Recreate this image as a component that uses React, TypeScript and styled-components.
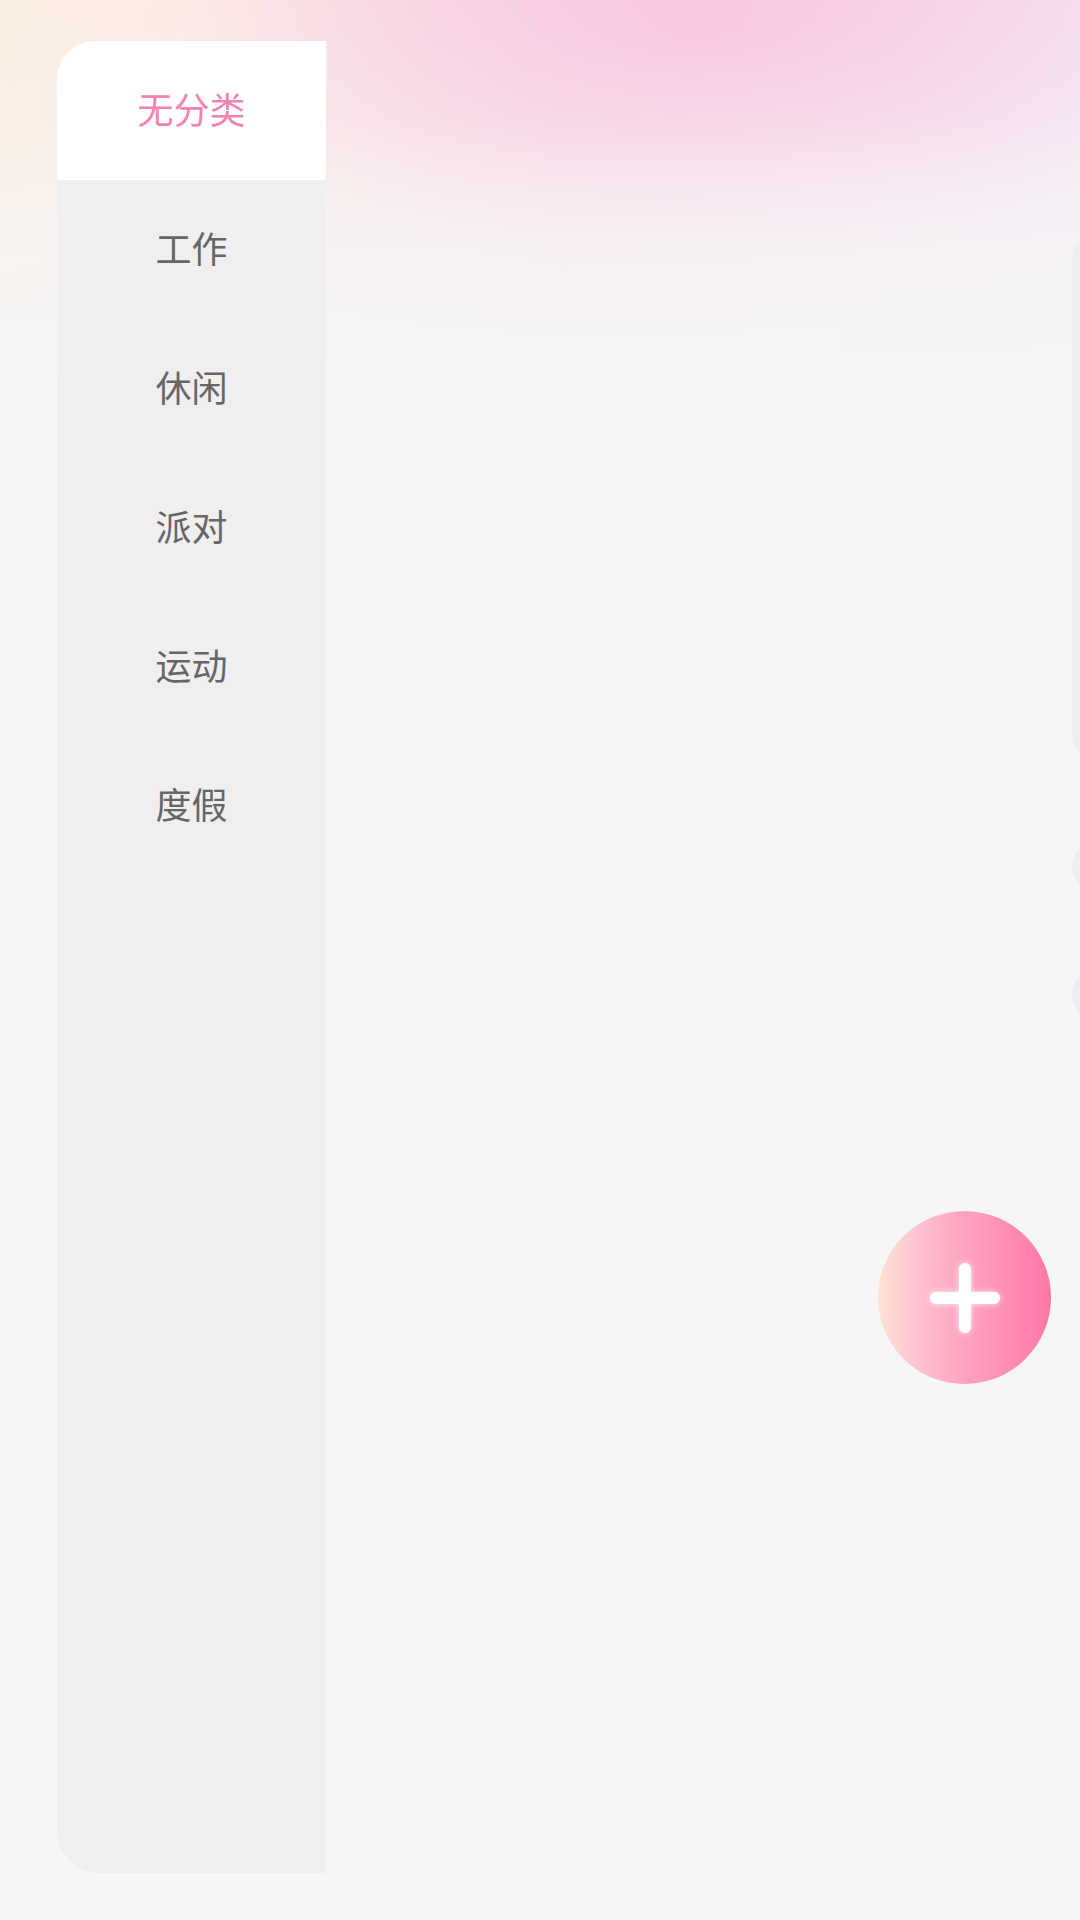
import { useState } from "react";
import { createGlobalStyle, styled } from "styled-components";

const GlobalStyle = createGlobalStyle`
    html, body{
        margin:0;
        padding:0;
        background:#f6f6f6;
    }
    *{
        box-sizing:border-box;
    }
`;

const Page = styled.div`
    position:relative;
    width:1080px;
    height:1920px;
    overflow:hidden;
    display:flex;
    padding:41px 0 0 57px;
    font-family:"Noto Sans CJK SC", "Noto Sans", sans-serif;
    background-color:#f6f6f6;
    background-image:
        linear-gradient(180deg, rgba(246,246,246,0) 0px, rgba(246,246,246,0.2) 120px, rgba(246,246,246,0.75) 250px, #f6f6f6 380px),
        radial-gradient(ellipse 520px 240px at 700px 30px, rgba(248,196,224,0.9), rgba(248,196,224,0)),
        linear-gradient(90deg, #fbeee2 0%, #f9e8e6 28%, #f8dfe9 52%, #f6e2ef 78%, #f4e7f5 100%);
`;

const Sidebar = styled.nav`
    width:269px;
    height:1832px;
    flex-shrink:0;
    display:flex;
    flex-direction:column;
    background:#f1eeef;
    border-radius:38px 0 0 42px;
    overflow:hidden;
`;

const Item = styled.div<{ $active: boolean }>`
    height:139px;
    display:flex;
    align-items:center;
    justify-content:center;
    padding-bottom:6px;
    font-size:36px;
    color:${p => (p.$active ? "#f283b2" : "#666666")};
    background:${p => (p.$active ? "#ffffff" : "transparent")};
    cursor:pointer;
`;

const Content = styled.main`
    flex:1;
    min-width:0;
    display:flex;
    flex-direction:column;
    align-items:flex-start;
    padding:186px 0 0 746px;
    overflow:hidden;
`;

const Card = styled.div`
    width:420px;
    height:540px;
    flex-shrink:0;
    border-radius:34px;
    background:#efeeef;
`;

const Dot = styled.div<{ $tone: string; $gap: number }>`
    width:60px;
    height:56px;
    flex-shrink:0;
    margin-top:${p => p.$gap}px;
    border-radius:50%;
    background:${p => p.$tone};
`;

const Fab = styled.button`
    position:absolute;
    left:878px;
    top:1211px;
    width:173px;
    height:173px;
    border:none;
    padding:0;
    border-radius:50%;
    background:linear-gradient(90deg, #fde4d2 0%, #ffc3d3 22%, #ffa3c0 50%, #ff8bb2 78%, #ff78a5 100%);
    display:flex;
    align-items:center;
    justify-content:center;
    cursor:pointer;
`;

const Plus = styled.span`
    position:relative;
    width:70px;
    height:70px;
    filter:blur(0.7px) drop-shadow(0 0 3px rgba(255,255,255,0.8));
    &::before,
    &::after{
        content:"";
        position:absolute;
        background:#ffffff;
        border-radius:6px;
    }
    &::before{
        left:0;
        top:29px;
        width:70px;
        height:12px;
    }
    &::after{
        left:29px;
        top:0;
        width:12px;
        height:70px;
    }
`;

const categories = ["无分类", "工作", "休闲", "派对", "运动", "度假"];

export default function App(){
    const [active, setActive] = useState(0);
    return (
        <>
            <GlobalStyle />
            <Page>
                <Sidebar>
                    {categories.map((c, i) => (
                        <Item key={c} $active={i === active} onClick={() => setActive(i)}>{c}</Item>
                    ))}
                </Sidebar>
                <Content>
                    <Card />
                    <Dot $tone="#efeeef" $gap={72} />
                    <Dot $tone="#edecf4" $gap={72} />
                </Content>
                <Fab aria-label="add"><Plus /></Fab>
            </Page>
        </>
    );
}
